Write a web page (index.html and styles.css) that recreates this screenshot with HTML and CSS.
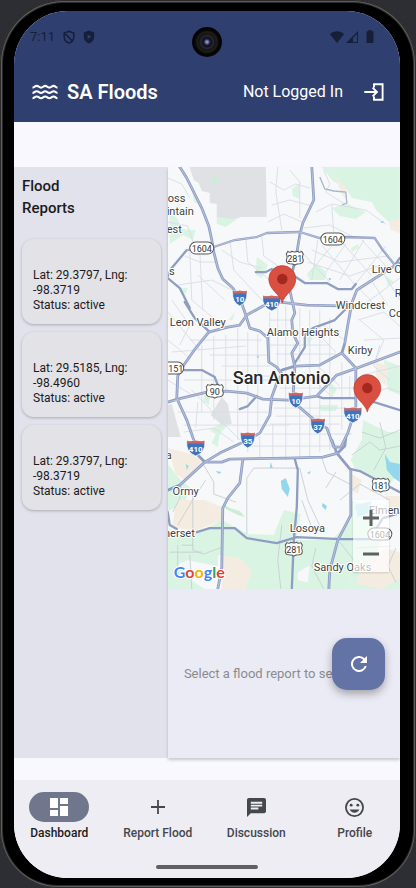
FILE: index.html
```html
<!DOCTYPE html>
<html lang="en">
<head>
<meta charset="utf-8">
<meta name="viewport" content="width=device-width, initial-scale=1">
<title>SA Floods</title>
<link rel="stylesheet" href="styles.css">
</head>
<body>
<div class="device">
  <span class="camera"></span>
  <div class="screen">
    <header class="top">
      <div class="status">
        <div class="status-group">
          <span class="time">7:11</span>
          <svg width="12" height="14" viewBox="0 0 12 14"><path d="M6 1.2 L10.8 3 V7 C10.8 10 8.6 12.2 6 13 C3.4 12.2 1.2 10 1.2 7 V3 Z M2 3.4 L9.6 11.2" fill="none" stroke="currentColor" stroke-width="1.5"/></svg>
          <svg width="12" height="14" viewBox="0 0 12 14"><path d="M6 .5 L11.2 2.5 V7 C11.2 10 9 12.500 6 13.500 C3 12.500 .8 10 .8 7 V2.500 Z M4.600 4.400 V9 L8.400 6.700 Z" fill="currentColor" fill-rule="evenodd"/></svg>
        </div>
        <div class="status-group right">
          <svg width="14" height="12" viewBox="0 0 14 12"><path d="M0 3.200 C4 -.6 10 -.6 14 3.200 L7 12 Z" fill="currentColor"/></svg>
          <svg width="12" height="12" viewBox="0 0 12 12"><path d="M0 12 L12 0 V12 Z M7 7 V11 H11 V2.800 Z" fill="currentColor" fill-rule="evenodd"/></svg>
          <svg class="battery" width="8" height="13" viewBox="0 0 8 13"><path d="M2.500 0 H5.500 V1.200 H7.500 V13 H.5 V1.200 H2.500 Z" fill="currentColor"/></svg>
        </div>
      </div>
      <div class="appbar">
        <svg width="26" height="16" viewBox="0 0 26 16"><g fill="none" stroke="currentColor" stroke-width="2.100"><path id="w" d="M.5 3.600 C2.500 3.600 2.500 1.900 4.700 1.900 S7 3.600 9 3.600 S11.200 1.900 13.200 1.900 S15.400 3.600 17.400 3.600 S19.600 1.900 21.600 1.900 S23.600 3.600 25.500 3.600"/><use href="#w" y="5.300"/><use href="#w" y="10.600"/></g></svg>
        <h1>SA Floods</h1>
        <span class="user">Not Logged In</span>
        <button class="login" type="button" aria-label="Log in"><svg width="20" height="18" viewBox="0 0 20 18"><path d="M10 4.500 V1.200 H18.600 V16.800 H10 V13.500 M.3 9 H13 M8.600 4.600 L13 9 L8.600 13.400" fill="none" stroke="currentColor" stroke-width="1.900"/></svg></button>
      </div>
    </header>

    <main class="content">
      <aside class="reports">
        <h2>Flood Reports</h2>
        <ul>
          <li class="card">Lat: 29.3797, Lng: -98.3719<br>Status: active</li>
          <li class="card">Lat: 29.5185, Lng: -98.4960<br>Status: active</li>
          <li class="card">Lat: 29.3797, Lng: -98.3719<br>Status: active</li>
        </ul>
      </aside>

      <div class="pane">
        <section class="map" aria-label="Map">
          <svg class="mapart" viewBox="168 167 232 422" preserveAspectRatio="xMidYMid slice">
            <defs>
              <g id="interstate">
                <path d="M-7 -7 H7 Q8.500 4 0 8 Q-8.500 4 -7 -7 Z" fill="#3f74bd" stroke="#fff" stroke-width=".8"/>
                <path d="M-7 -7.500 L-5 -6.500 L0 -7.500 L5 -6.500 L7 -7.500 V-4.500 H-7 Z" fill="#cf6460"/>
              </g>
              <g id="interstate-wide">
                <path d="M-9 -7 H9 Q10.500 4 0 8 Q-10.500 4 -9 -7 Z" fill="#3f74bd" stroke="#fff" stroke-width=".8"/>
                <path d="M-8.500 -7.500 L-6 -6.500 L0 -7.500 L6 -6.500 L8.500 -7.500 V-4.500 H-8.500 Z" fill="#cf6460"/>
              </g>
              <path id="us" d="M-7 -6.500 Q-4 -5 -3 -6.800 Q0 -5.500 3 -6.800 Q4 -5 7 -6.500 L8.500 -4 Q7 -1 8.500 2 Q8.500 5.500 5 5.600 Q2 5.600 0 7 Q-2 5.600 -5 5.600 Q-8.500 5.500 -8.500 2 Q-7 -1 -8.500 -4 Z" fill="#fff" stroke="#555" stroke-width="1"/>
              <rect id="state" x="-12" y="-6" width="24" height="12" rx="6" fill="#fff" stroke="#555" stroke-width="1"/>
              <g id="pin">
                <path d="M0 0 C-2 -9 -13.500 -13 -13.500 -24 A13.500 13.500 0 0 1 13.500 -24 C13.500 -13 2 -9 0 0 Z" fill="#d94f41" stroke="#b8392d" stroke-width=".6"/>
                <circle cy="-24" r="5.200" fill="#a52820"/>
              </g>
            </defs>
            <rect x="168" y="167" width="232" height="422" fill="#f7f8f9"/>

            <g fill="#d9f4e3">
              <path d="M322 167 H400 V219 L389 222 L377 211 L372 202 L352 198 L346 188 L333 181 Z"/>
              <path d="M332 208 L348 204 L366 212 L356 219 L340 216 Z"/>
              <path d="M292 189 L300 183 L300 199 L293 196 Z"/>
              <path d="M170 212 L178 219 L182 229 L196 230 L193 240 L183 235 L170 244 Z"/>
              <path d="M193 190 L199 204 L194 202 Z"/>
              <path d="M217 217 L240 217 L226 227 L217 224 Z"/>
              <path d="M257 257 L268 265 L262 278 L256 275 Z"/>
              <path d="M180 288 L188 288 L186 294 L180 292 Z"/>
              <path d="M307 274 L317 264 L327 273 L325 280 L310 280 Z"/>
              <path d="M351 248 L359 244 L358 248 L352 252 Z"/>
              <path d="M205 395 L210 397 L209 405 L203 401 Z"/>
              <path d="M210 430 L220 424 L227 426 L220 434 L218 447 L212 443 L216 434 Z"/>
              <path d="M229 320 L235 312 L233 320 Z"/>
              <path d="M306 333 L313 338 L308 346 Z M319 405 L338 405 L336 411 L321 411 Z M328 378 L337 390 L332 397 Z"/>
              <path d="M363 420 L388 432 H400 V470 L388 488 L375 480 L356 470 L351 460 L362 440 Z"/>
              <path d="M384 360 L400 366 V395 L388 390 Z M386 275 L394 282 L388 286 Z"/>
              <path d="M168 464 L181 480 L190 487 L186 500 L168 512 Z"/>
              <path d="M168 537 L200 532 L222 520 L248 534 L274 535 L284 510 L301 514 L296 540 L332 540 L351 520 V589 H168 Z"/>
              <path d="M351 500 L372 508 L380 545 L362 589 H351 Z M351 560 H400 V589 H351 Z"/>
            </g>
            <g fill="#f4ece1">
              <path d="M168 448 L192 454 L203 462 L185 480 L176 474 Z"/>
              <path d="M177 500 L205 500 L222 507 V520 L208 526 L196 530 L172 528 Z"/>
              <path d="M222 555 L240 558 L252 570 L246 589 H222 Z"/>
              <path d="M335 176 L346 188 L347 201 L342 194 Z M389 222 L400 218 V233 L391 230 Z"/>
              <path d="M376 362 L388 366 L386 386 L376 376 Z"/>
              <path d="M352 474 L362 480 L358 494 L352 490 Z M362 566 L386 548 L400 552 V578 L382 589 L356 584 Z M385 496 H400 V510 L388 508 Z"/>
            </g>
            <path d="M188 578 L178 564 L188 560 L218 566 V555 H222 V589 H205 Z M298 572 L310 565 L308 582 L298 580 Z M303 512 L322 522 L330 535 L303 535 Z" fill="#f7f8f9"/>
            <g fill="#dfe1e5">
              <path d="M190 167 H266 L267 217 L242 217 L233 219 L217 217 V204 L210 203 V193 L202 191 L199 183 L194 180 Z"/>
              <path d="M222 397 L228 404 L232 424 L222 425 L211 415 Z M168 405 L172 404 L181 437 H168 Z"/>
            </g>
            <g fill="#cbedd4">
              <circle cx="214.500" cy="180" r="3.200"/>
              <path d="M224 504 L230 508 L240 511 L245 517 L238 515 L226 509 Z"/>
            </g>
            <g fill="#93d7ec">
              <path d="M281 481 L286 478 L290 489 L288 497 L282 489 Z M385 454 L390 462 L400 464 V482 L394 478 L387 470 Z"/>
              <path d="M323 503 L327 506 L326 510 L322 506 Z M307 473 L311 471 L310 474 Z M186 464 L189 466 L187 470 Z M216 471 L222 472 L219 474 Z M271 462 L273 468 L270 468 Z M257 355 h2 v3 h-2 Z M381 221 h3 v2 h-3 Z M329 278 h2 v2 h-2 Z"/>
              <path d="M355 505 L372 501 L368 513 L358 517 Z" opacity=".7"/>
            </g>

            <g fill="none" stroke="#d8dde6" stroke-width=".9">
              <path d="M168 178 L182 184 L190 198 M168 222 L188 226 L196 250 M185 256 L200 262 L218 262 M178 285 L212 280 L232 290 M190 250 L192 300 L216 320 M200 250 L203 310 M168 312 L200 350 M172 300 L190 325 L180 345 M168 340 L190 358 M198 275 L225 300 M222 250 L240 262 L262 268 M230 240 L234 270 L262 300 M246 238 L248 262 L276 285 M262 236 L264 256 L284 270"/>
              <path d="M270 182 L284 190 L296 184 L310 188 M272 205 L290 200 L312 206 M268 222 L284 214 L302 222 M278 167 L276 192 L282 230 M290 170 L300 182 L300 218 M324 170 L330 184 L326 192 L345 204 M316 212 L332 204 L366 210 L386 224 M332 205 L334 235 M304 228 L330 225 L352 236 M312 250 L340 262 L388 256 M308 262 L350 276 L378 266"/>
              <path d="M300 250 L330 282 M322 245 L356 286 M342 242 L372 276 M362 240 L386 266 M340 280 L364 240 M326 272 L346 244 M354 286 L386 246 M310 272 L332 246 M318 240 L312 280 M360 289 L376 306 M372 281 L388 306 M384 274 L400 300 M365 304 L400 278 M358 320 L384 312 L400 326"/>
              <path d="M172 352 L246 346 M190 340 H262 M184 380 H270 M178 412 H268 M184 425 H290 M202 345 V412 M214 336 V420 M226 335 V392 M238 328 V440 M248 332 V452 M258 334 V430 M210 355 H268 M222 366 H270 M240 376 H278 M192 390 L240 440 M184 432 L214 428 L234 442 M198 402 L196 428 M168 380 L194 396"/>
              <path d="M270 312 V362 M278 306 V368 M286 306 V460 M300 308 V362 M310 310 V458 M320 310 V452 M330 318 V450 M270 320 H292 M270 330 H292 M270 345 H330 M276 354 H336 M282 380 H336 M280 388 H356 M274 408 H354 M276 416 H350 M270 424 H340 M264 434 H352 M252 446 H338 M260 436 V458 M273 424 V458 M300 404 V458 M342 362 V430 M350 376 V398"/>
              <path d="M314 330 L336 352 M322 324 L345 340 M318 366 L340 386 M304 372 L334 398 M360 320 L384 340 L376 360 M362 375 L400 366 M366 395 L388 388 L400 392 M364 340 L400 338 M380 345 L374 366 L390 380"/>
            </g>
            <g fill="none" stroke="#c6cfd3" stroke-width=".9">
              <path d="M204 465 L214 482 L214 494 L236 502 M193 496 V550 L204 554 L222 547 M178 525 L194 498 L206 480 M182 545 H194 M170 552 H202 M178 545 V575 M190 555 L192 589 M247 478 V534 M247 478 L254 468 H300 M282 525 L278 560 L281 589 M300 468 L308 500 L322 530 M322 458 L327 472 L350 484 M336 472 L326 488 M302 500 L312 528 M316 548 L312 566 L324 589 M340 542 L354 560 M356 548 L390 546 M396 548 L388 566 L396 582 M352 455 L370 442 L380 450 L400 446 M380 422 L386 448 L374 470 M362 432 L380 438 L400 430 M340 500 L360 484 L390 500 M173 512 L180 498 L181 486"/>
              <path d="M320 177 L325 189 L334 191 L346 192 L347 203 L342 205" stroke="#a9b5cc" stroke-width="1.300"/>
            </g>

            <g fill="none" stroke-linejoin="round" stroke-linecap="round">
              <g stroke="#8f9dc3" stroke-width="2.800">
                <path d="M180 167 L187 178 L193 190 L202 208 L209 226 L212 240 L214 252 L218 268 L223 279 L233 288 L240 298 L246 315 L250 328 L260 331 L268 338 L269 362 L277 367 L282 374 L277 383 L272 397 L270 415 L260 433 L248 440 L220 453 L205 462 L180 485 L168 490"/>
                <path d="M280 302 H274 L265 305 L247 315 L240 325 L228 327 L209 332 L196 348 L182 368 L178 376 L177 398 L187 420 L194 440 L198 455 L205 462 L222 462 L230 459 L288 458 L323 457 L338 453 L345 446 L346 438"/>
                <path d="M280 302 L307 305 L350 306 M399 263 L357 290 L352 303 L348 325 L345 343 L342 353 L356 368 L356 407 L353 417 L348 433 L341 447 L334 447 L327 428 L317 422 L295 403"/>
                <path d="M342 353 L320 365 L295 366 L282 370 M168 402 L178 399 L207 392 L227 391 L247 393 L263 399 L288 400 L317 396 L337 375 L357 368 L400 352"/>
                <path d="M312 167 L314 200 L303 223 L300 235 L297 253 L293 270 L290 290 L295 313 L292 320 L293 333 L298 343 L292 353 L295 367 L293 400"/>
                <path d="M332 440 L337 453 L351 470 V515 L338 540 L330 570 L329 589 M243 460 L240 483 L228 498 L223 508 L222 567 L218 589"/>
              </g>
              <g stroke="#8f9dc3" stroke-width="2.300">
                <path d="M168 276 L172 268 L187 250 L214 247 L235 240 L257 237 L267 233 L300 232 L320 238 L345 237 L375 238 L383 250 L395 265 L400 258 M168 278 L180 288 L190 308 M185 302 L195 318 L210 332"/>
                <path d="M256 272 H266 L272 269 M293 275 L305 283 L327 283 L338 289 L352 289 L356 284 M347 308 L335 320 L313 328 L305 335 V347 L295 363 M317 396 L323 398 L355 398 M368 400 L400 410 M183 370 L202 370 L215 377 L218 385 M240 409 L248 406 L257 396"/>
                <path d="M351 469 L360 471 L400 492 M295 459 L298 470 L297 507 L294 540 L292 589 M197 532 L210 528 L235 528 L247 538 L277 543 L297 537 L340 539 L370 539 L383 518 L400 513 M168 512 L170 525 L177 529"/>
              </g>
              <path stroke="#b7c1dc" stroke-width="1" d="M180 167 L187 178 L193 190 L202 208 L209 226 L212 240 L214 252 L218 268 L223 279 L233 288 L240 298 L246 315 L250 328 L260 331 L268 338 L269 362 L277 367 L282 374 L277 383 L272 397 L270 415 L260 433 L248 440 L220 453 L205 462 L180 485 M265 305 L247 315 L240 325 L228 327 L209 332 L196 348 L182 368 L178 376 L177 398 L187 420 L194 440 M205 462 L222 462 L230 459 L288 458 L323 457 L338 453 M280 302 L307 305 L350 306 M399 263 L357 290 L352 303 L345 343 M342 353 L356 368 V407 L348 433 L341 447 L334 447 L327 428 L317 422 L295 403 M342 353 L320 365 L295 366 M312 167 L314 200 L303 223 L297 253 M290 290 L295 313 L292 320 L293 333 L298 343 L292 353 L295 367 L293 400 M351 470 V515 L338 540 L330 570 L329 589 M243 460 L240 483 L228 498 L223 508 L222 567 L218 589 M168 402 L207 392 L227 391 L247 393 L263 399 L288 400 L317 396 L337 375 L357 368 L400 352 M187 250 L214 247 L235 240 L257 237 L267 233 L300 232 L320 238 L375 238 L395 265"/>
            </g>

            <g class="shield-text">
              <use href="#state" x="202" y="248"/><text x="202" y="252">1604</text>
              <use href="#state" x="333" y="239"/><text x="333" y="243">1604</text>
              <use href="#state" x="380" y="534"/><text x="380" y="538">1604</text>
              <use href="#state" x="172" y="368"/><text x="176" y="372">151</text>
              <use href="#us" x="295" y="258"/><text x="295" y="262">281</text>
              <use href="#us" x="215" y="391"/><text x="215" y="395">90</text>
              <use href="#us" x="294" y="549"/><text x="294" y="553">281</text>
              <use href="#us" x="381" y="485"/><text x="381" y="489">181</text>
            </g>
            <g class="shield-text light">
              <use href="#interstate" x="240" y="298"/><text x="240" y="302">10</text>
              <use href="#interstate-wide" x="272" y="303"/><text x="272" y="307">410</text>
              <use href="#interstate" x="296" y="400"/><text x="296" y="404">10</text>
              <use href="#interstate" x="318" y="426"/><text x="318" y="430">37</text>
              <use href="#interstate-wide" x="353" y="415"/><text x="353" y="419">410</text>
              <use href="#interstate" x="248" y="440"/><text x="248" y="444">35</text>
              <use href="#interstate-wide" x="196" y="448"/><text x="196" y="452">410</text>
            </g>
            <g class="place">
              <text x="168" y="202">oss</text>
              <text x="194" y="215" text-anchor="end">intain</text>
              <text x="182" y="233" text-anchor="end">est</text>
              <text x="175" y="275" text-anchor="end">s</text>
              <text x="170" y="326">Leon Valley</text>
              <text x="267" y="336">Alamo Heights</text>
              <text x="336" y="309">Windcrest</text>
              <text x="348" y="354">Kirby</text>
              <text x="372" y="273">Live C</text>
              <text x="395" y="297">R</text>
              <text x="389" y="317">Co</text>
              <text x="172" y="459" text-anchor="end">a</text>
              <text x="199" y="495" text-anchor="end">Ormy</text>
              <text x="195" y="537" text-anchor="end">nerset</text>
              <text x="290" y="532">Losoya</text>
              <text x="314" y="571">Sandy Oaks</text>
              <text x="369" y="514">Elmen</text>
              <text class="city" x="233" y="384">San Antonio</text>
            </g>
            <use href="#pin" x="282.500" y="303"/>
            <use href="#pin" x="367.500" y="412"/>
            <text class="google" x="174" y="578"><tspan fill="#4285f4">G</tspan><tspan fill="#db4437">o</tspan><tspan fill="#f4b400">o</tspan><tspan fill="#4285f4">g</tspan><tspan fill="#3c9a57">l</tspan><tspan fill="#db4437">e</tspan></text>
          </svg>
          <div class="zoom">
            <button type="button" aria-label="Zoom in"><svg width="16" height="16" viewBox="0 0 16 16"><path d="M8 0 V16 M0 8 H16" stroke="currentColor" stroke-width="3"/></svg></button>
            <button type="button" aria-label="Zoom out"><svg width="16" height="16" viewBox="0 0 16 16"><path d="M0 8 H16" stroke="currentColor" stroke-width="3"/></svg></button>
          </div>
        </section>
        <section class="details"><p>Select a flood report to see details.</p></section>
      </div>
      <button class="fab" type="button" aria-label="Refresh"><svg width="16" height="16" viewBox="0 0 16 16"><path d="M13.650 2.350 A8 8 0 1 0 15.730 10 H13.650 A6 6 0 1 1 8 2 C9.660 2 11.140 2.690 12.220 3.780 L9 7 H16 V0 Z" fill="currentColor"/></svg></button>
    </main>

    <nav class="tabs">
      <div class="tabrow">
        <a href="#dashboard" class="tab active"><span class="pill"><svg width="18" height="18" viewBox="0 0 18 18"><path d="M0 10 H8 V0 H0 Z M0 18 H8 V12 H0 Z M10 18 H18 V8 H10 Z M10 0 V6 H18 V0 Z" fill="currentColor"/></svg></span>Dashboard</a>
        <a href="#report" class="tab"><span class="pill"><svg width="14" height="14" viewBox="0 0 14 14"><path d="M7 0 V14 M0 7 H14" stroke="currentColor" stroke-width="1.800"/></svg></span>Report Flood</a>
        <a href="#discussion" class="tab"><span class="pill"><svg width="19" height="19" viewBox="0 0 20 20"><path d="M18 0 H2 C.9 0 0 .9 0 2 V20 L4 16 H18 C19.100 16 20 15.100 20 14 V2 C20 .9 19.100 0 18 0 Z M4 4 H16 V6 H4 Z M12 12 H4 V10 H12 Z M16 9 H4 V7 H16 Z" fill="currentColor" fill-rule="evenodd"/></svg></span>Discussion</a>
        <a href="#profile" class="tab"><span class="pill"><svg width="19" height="19" viewBox="0 0 20 20"><circle cx="10" cy="10" r="9" fill="none" stroke="currentColor" stroke-width="1.900"/><circle cx="6.500" cy="7.500" r="1.500" fill="currentColor"/><circle cx="13.500" cy="7.500" r="1.500" fill="currentColor"/><path d="M4.900 12 H15.100 C14.300 14 12.300 15.500 10 15.500 S5.700 14 4.900 12 Z" fill="currentColor"/></svg></span>Profile</a>
      </div>
      <span class="home"></span>
    </nav>
  </div>
</div>
</body>
</html>
```

FILE: styles.css
```css
* { box-sizing: border-box; }

body {
  margin: 0;
  background: #2d2e33;
  font-family: Roboto, "Liberation Sans", sans-serif;
  color: #1b1b20;
}

h1, h2, p, ul { margin: 0; padding: 0; }
ul { list-style: none; }
button { border: 0; padding: 0; background: none; font: inherit; color: inherit; }
svg { display: block; flex: none; }

.device {
  position: relative;
  display: flex;
  min-height: 100vh;
  padding: 11px 16px 10px 14px;
  background: #000;
  border-radius: 64px 64px 58px 58px;
  box-shadow: inset 0 0 0 1px #2a2a2a, inset 0 0 0 2px #5e5e5e, inset 0 0 0 3px #2a2a2a;
}

.camera {
  position: absolute;
  z-index: 2;
  top: 27px;
  left: calc(50% - 16px);
  width: 30px;
  height: 30px;
  border-radius: 50%;
  background: radial-gradient(circle, #8b93a8 0 1px, #1c1a4a 3px, #101014 5px, #2b2b2d 6px, #141414 8px, #1d1d1d 10px, #050505 12px);
}

.screen {
  flex: 1;
  min-width: 0;
  display: flex;
  flex-direction: column;
  overflow: hidden;
  border-radius: 54px;
  background: #faf8ff;
}

.top {
  background: #2f3f70;
  padding: 16px 16px 0;
}

.status {
  display: flex;
  justify-content: space-between;
  align-items: center;
  height: 19px;
  padding-right: 10px;
  color: #161e38;
}

.status-group { display: flex; align-items: center; gap: 8px; }
.status-group.right { gap: 2px; }
.battery { margin-left: 6px; }
.time { font-size: 13px; line-height: 16px; }

.appbar {
  display: flex;
  align-items: center;
  height: 60px;
  margin-top: 16px;
  padding-left: 2px;
  color: #fff;
}

.appbar h1 {
  flex: 1;
  margin-left: 9px;
  font-size: 20px;
  line-height: 24px;
  font-weight: 600;
}

.user { font-size: 16px; line-height: 20px; }
.login { margin-left: 21px; }

.content {
  position: relative;
  flex: 1;
  display: grid;
  grid-template-columns: minmax(0, 2fr) minmax(0, 3fr);
  margin: 45px 0 22px;
}

.reports {
  padding: 8px 7px 8px 8px;
  background: #e1e2ec;
}

.reports h2 {
  width: min-content;
  margin-bottom: 20px;
  font-size: 15px;
  line-height: 22px;
  font-weight: 500;
}

.reports ul { display: flex; flex-direction: column; gap: 8px; }

.card {
  padding: 29px 11px 11px;
  border-radius: 12px;
  background: #e3e2e7;
  box-shadow: 0 1px 3px rgba(0, 0, 0, .25);
  font-size: 12px;
  line-height: 15px;
}

.pane {
  display: flex;
  flex-direction: column;
  box-shadow: 0 2px 3px rgba(0, 0, 0, .2);
}

.map {
  position: relative;
  flex: 5;
  min-height: 0;
  overflow: hidden;
}

.mapart { position: absolute; width: 100%; height: 100%; }

.place { font-size: 11px; fill: #3c3f43; stroke: #fff; stroke-width: 2px; paint-order: stroke; stroke-linejoin: round; }
.city { font-size: 18px; font-weight: 500; fill: #26282b; }
.shield-text { font-size: 9px; text-anchor: middle; fill: #333; }
.light { font-size: 8px; font-weight: 700; fill: #fff; }
.google { font-family: Lato, sans-serif; font-size: 16px; font-weight: 700; stroke: #fff; stroke-width: 2px; paint-order: stroke; }

.zoom {
  position: absolute;
  right: 11px;
  bottom: 17px;
  display: flex;
  flex-direction: column;
  width: 36px;
  background: rgba(255, 255, 255, .65);
  box-shadow: 0 1px 2px rgba(0, 0, 0, .15);
  color: #606060;
}

.zoom button { display: grid; place-items: center; height: 36px; }

.details {
  flex: 2;
  display: flex;
  align-items: center;
  justify-content: center;
  background: #eaebf4;
  color: #8b8b90;
  font-size: 13px;
  line-height: 20px;
  white-space: nowrap;
}

.fab {
  position: absolute;
  right: 15px;
  bottom: 68px;
  display: grid;
  place-items: center;
  width: 53px;
  height: 52px;
  border-radius: 15px;
  background: #6473a6;
  color: #fff;
  box-shadow: 0 4px 8px rgba(0, 0, 0, .3);
}

.tabs {
  display: flex;
  flex-direction: column;
  align-items: center;
  justify-content: space-between;
  padding: 12px 0 9px;
  height: 98px;
  background: #eeedf3;
}

.tabrow {
  align-self: stretch;
  display: grid;
  grid-template-columns: repeat(4, minmax(0, 1fr));
  gap: 8px;
}

.tab {
  display: flex;
  flex-direction: column;
  align-items: center;
  gap: 3px;
  color: #44474c;
  font-size: 12px;
  line-height: 16px;
  font-weight: 500;
  text-decoration: none;
  white-space: nowrap;
}

.pill {
  display: grid;
  place-items: center;
  width: 60px;
  height: 30px;
  border-radius: 15px;
}

.active { color: #1b1b20; }
.active .pill { background: #70768b; color: #fff; }

.home { width: 102px; height: 4px; border-radius: 2px; background: #606062; }
```
